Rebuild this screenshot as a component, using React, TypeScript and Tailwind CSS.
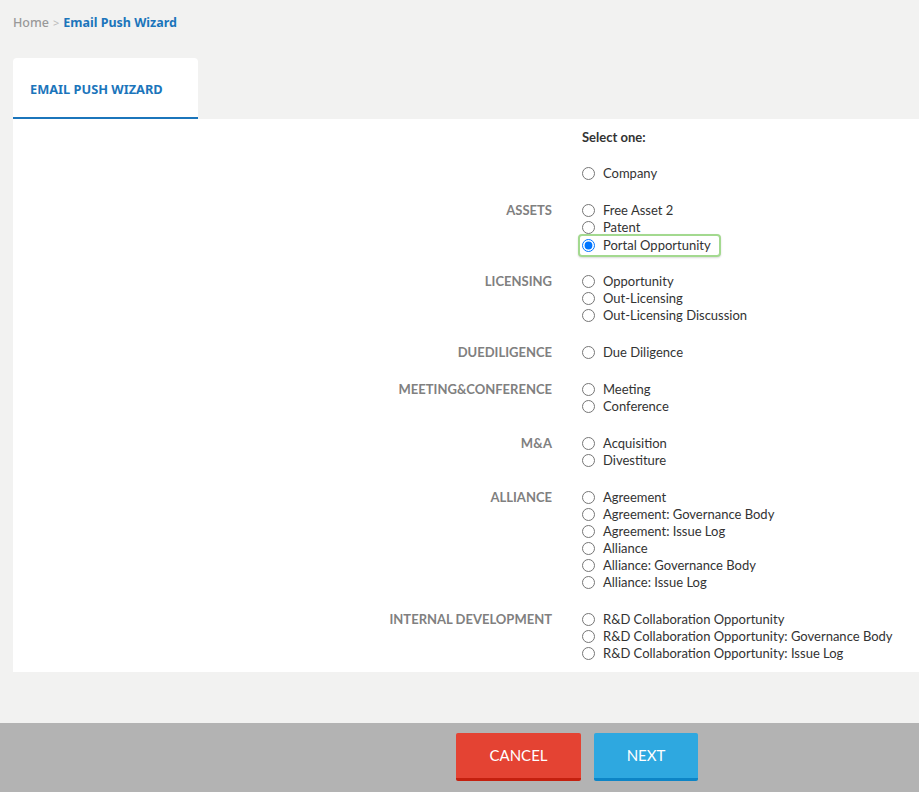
import React, { useState } from 'react';

type Group = { label: string; items: string[] };

const groups: Group[] = [
  { label: '', items: ['Company'] },
  { label: 'ASSETS', items: ['Free Asset 2', 'Patent', 'Portal Opportunity'] },
  { label: 'LICENSING', items: ['Opportunity', 'Out-Licensing', 'Out-Licensing Discussion'] },
  { label: 'DUEDILIGENCE', items: ['Due Diligence'] },
  { label: 'MEETING&CONFERENCE', items: ['Meeting', 'Conference'] },
  { label: 'M&A', items: ['Acquisition', 'Divestiture'] },
  {
    label: 'ALLIANCE',
    items: [
      'Agreement',
      'Agreement: Governance Body',
      'Agreement: Issue Log',
      'Alliance',
      'Alliance: Governance Body',
      'Alliance: Issue Log',
    ],
  },
  {
    label: 'INTERNAL DEVELOPMENT',
    items: [
      'R&D Collaboration Opportunity',
      'R&D Collaboration Opportunity: Governance Body',
      'R&D Collaboration Opportunity: Issue Log',
    ],
  },
];

export default function App() {
  const [selected, setSelected] = useState('Portal Opportunity');

  return (
    <div className="min-h-[792px] bg-[#f2f2f1] font-['Lato','Liberation_Sans',sans-serif] text-[13px] text-[#333]">
      {/* Breadcrumb */}
      <div className="pl-[13px] pt-[14px] h-[58px] font-['Noto_Sans','Liberation_Sans',sans-serif] text-[12.5px] leading-[17px]">
        <span className="text-[#999] font-medium">Home</span>
        <span className="text-[#bbb] mx-[4px] text-[11px]">&gt;</span>
        <span className="text-[#1b75bb] font-bold">Email Push Wizard</span>
      </div>

      {/* Tab */}
      <div className="pl-[13px]">
        <div className="w-[185px] h-[61px] bg-white rounded-t-[4px] border-b-2 border-[#1b75bb] flex items-center pl-[17px] pt-[4px] font-['Noto_Sans','Liberation_Sans',sans-serif] font-bold text-[12.8px] text-[#1b75bb]">
          EMAIL PUSH WIZARD
        </div>
      </div>

      {/* Panel */}
      <div className="ml-[13px] bg-white pt-[10px] pb-[10px]">
        <div className="flex leading-[17px]">
          <div className="w-[539px]" />
          <div className="ml-[30px] font-bold text-[#333]">Select one:</div>
        </div>

        {groups.map((g, gi) => (
          <div key={gi} className={`flex leading-[17px] ${gi === 0 ? 'mt-[19px]' : 'mt-[20px]'}`}>
            <div className="w-[539px] text-right font-bold text-[13px] text-[#808080]">{g.label}</div>
            <div className="ml-[30px] flex flex-col">
              {g.items.map((item) => {
                const isSel = selected === item;
                return (
                  <div key={item} className="h-[17px] flex items-center">
                    <label
                      className={
                        isSel
                          ? 'relative top-[1px] -ml-[4px] pl-[2px] pr-[8px] h-[23px] flex items-center gap-[8px] bg-white border-2 border-[#a3d98f] rounded-[4px] shadow-[0_1px_2px_rgba(0,0,0,0.15)]'
                          : 'flex items-center gap-[8px]'
                      }
                    >
                      <input
                        type="radio"
                        name="entity"
                        checked={isSel}
                        onChange={() => setSelected(item)}
                        className="m-0 w-[13px] h-[13px]"
                      />
                      <span>{item}</span>
                    </label>
                  </div>
                );
              })}
            </div>
          </div>
        ))}
      </div>

      <div className="h-[51px]" />

      {/* Footer */}
      <div className="bg-[#b3b3b3] h-[69px] pt-[10px] flex pl-[456px] gap-[13px]">
        <button className="w-[125px] h-[48px] bg-[#e44333] border-b-[3px] border-[#c4200f] rounded-[2px] text-white text-[15px]">
          CANCEL
        </button>
        <button className="w-[104px] h-[48px] bg-[#2ea8e0] border-b-[3px] border-[#0d85c6] rounded-[2px] text-white text-[15px]">
          NEXT
        </button>
      </div>
    </div>
  );
}
